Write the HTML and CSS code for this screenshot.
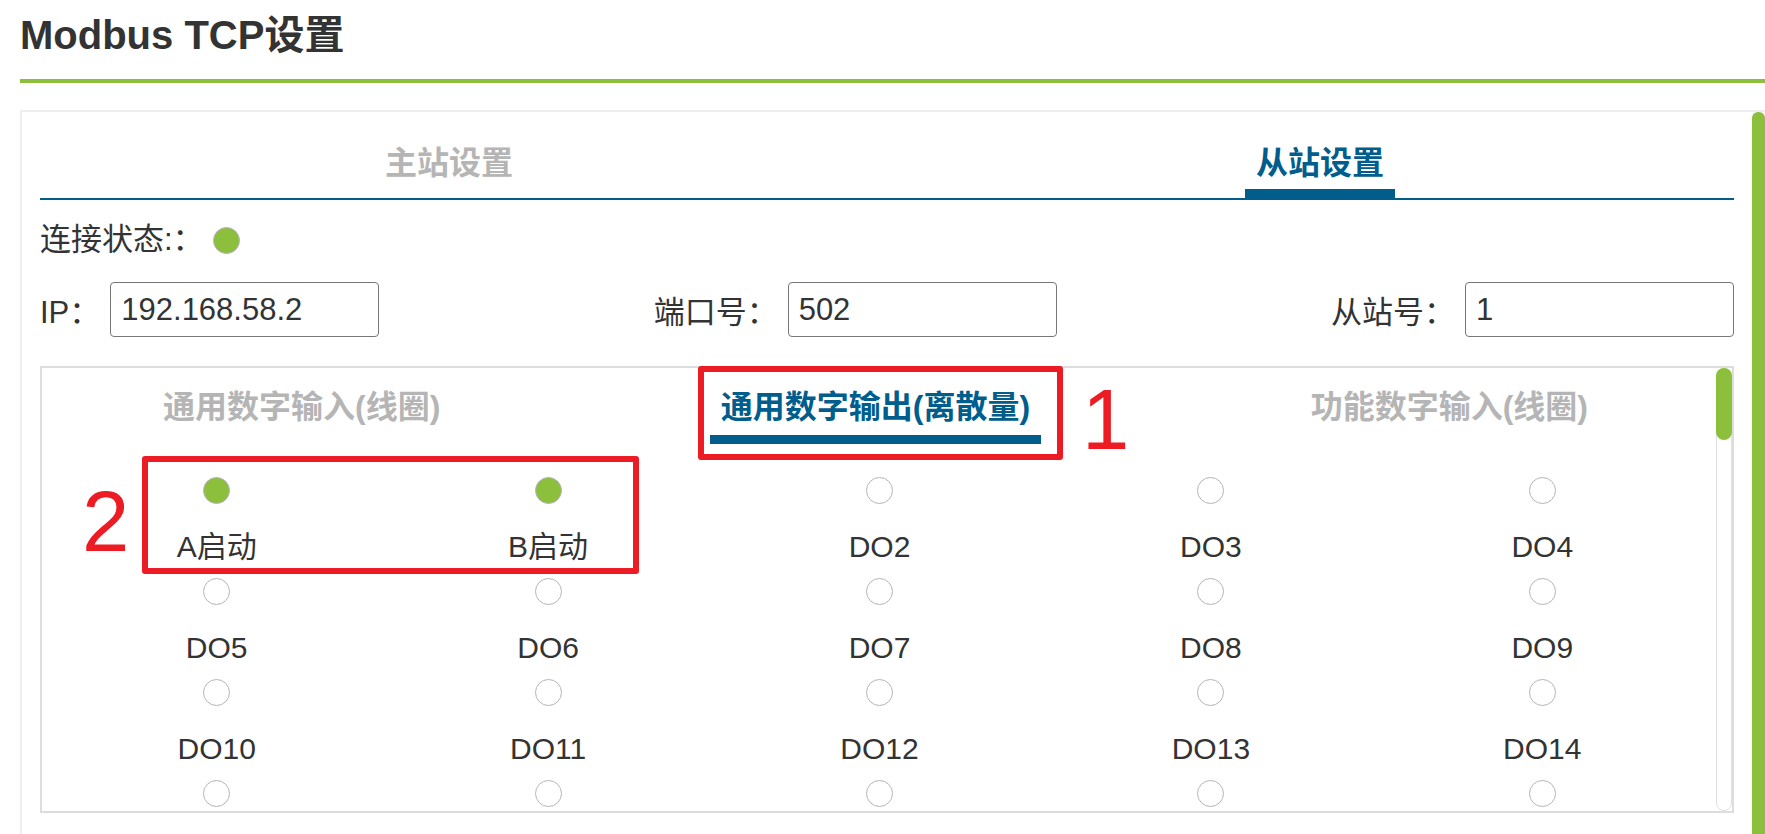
FILE: index.html
```html
<!DOCTYPE html>
<html lang="zh-CN">
<head>
<meta charset="utf-8">
<title>Modbus TCP设置</title>
<link rel="stylesheet" href="styles.css">
</head>
<body>
<div class="page">
  <h1 class="title">Modbus TCP设置</h1>
  <div class="panel">
    <div class="panel-body">
      <div class="tabs">
        <div class="tab">主站设置</div>
        <div class="tab active">从站设置</div>
      </div>
      <div class="status">
        <span>连接状态:：</span><span class="dot on status-dot"></span>
      </div>
      <div class="fields">
        <div class="field"><label>IP：</label><input class="inp" type="text" value="192.168.58.2"></div>
        <div class="field"><label>端口号：</label><input class="inp" type="text" value="502"></div>
        <div class="field"><label>从站号：</label><input class="inp" type="text" value="1"></div>
      </div>
      <div class="inner">
        <div class="inner-content">
          <div class="subtabs">
            <div class="subtab">通用数字输入(线圈)</div>
            <div class="subtab active">通用数字输出(离散量)</div>
            <div class="subtab">功能数字输入(线圈)</div>
          </div>
          <div class="grid">
            <div class="cell"><span class="dot on"></span><span class="lbl">A启动</span></div>
            <div class="cell"><span class="dot on"></span><span class="lbl">B启动</span></div>
            <div class="cell"><span class="dot"></span><span class="lbl">DO2</span></div>
            <div class="cell"><span class="dot"></span><span class="lbl">DO3</span></div>
            <div class="cell"><span class="dot"></span><span class="lbl">DO4</span></div>
            <div class="cell"><span class="dot"></span><span class="lbl">DO5</span></div>
            <div class="cell"><span class="dot"></span><span class="lbl">DO6</span></div>
            <div class="cell"><span class="dot"></span><span class="lbl">DO7</span></div>
            <div class="cell"><span class="dot"></span><span class="lbl">DO8</span></div>
            <div class="cell"><span class="dot"></span><span class="lbl">DO9</span></div>
            <div class="cell"><span class="dot"></span><span class="lbl">DO10</span></div>
            <div class="cell"><span class="dot"></span><span class="lbl">DO11</span></div>
            <div class="cell"><span class="dot"></span><span class="lbl">DO12</span></div>
            <div class="cell"><span class="dot"></span><span class="lbl">DO13</span></div>
            <div class="cell"><span class="dot"></span><span class="lbl">DO14</span></div>
            <div class="cell"><span class="dot"></span></div>
            <div class="cell"><span class="dot"></span></div>
            <div class="cell"><span class="dot"></span></div>
            <div class="cell"><span class="dot"></span></div>
            <div class="cell"><span class="dot"></span></div>
          </div>
        </div>
        <div class="vbar"><div class="thumb"></div></div>
      </div>
    </div>
    <div class="outer-bar"></div>
  </div>

  <div class="mark box1"></div>
  <div class="mark box2"></div>
  <div class="num num1">1</div>
  <div class="num num2">2</div>
</div>
</body>
</html>
```

FILE: styles.css
```css
html, body {
  margin: 0;
  height: 100%;
  overflow: hidden;
  background: #fff;
}
body {
  font-family: "Liberation Sans", "Noto Sans CJK SC", sans-serif;
  color: #333;
}
.page {
  position: relative;
  padding-left: 20px;
}
.title {
  margin: 0;
  padding-top: 10px;
  padding-bottom: 19px;
  font-size: 40px;
  line-height: 50px;
  font-weight: bold;
  color: #333;
  border-bottom: 4px solid #8cc03c;
}
.panel {
  margin-top: 27px;
  height: 760px;
  display: flex;
  border-top: 2px solid #eeeeee;
  border-left: 2px solid #eeeeee;
}
.panel-body {
  flex: 1;
  padding: 0 18px;
  min-width: 0;
}
.outer-bar {
  width: 13px;
  background: #8cc03c;
  border-radius: 6px 6px 0 0;
}
.tabs {
  display: flex;
  justify-content: space-between;
  padding: 31px 339px 0 334px;
  border-bottom: 2px solid #005d8c;
}
.tab {
  font-size: 32px;
  line-height: 40px;
  font-weight: bold;
  color: #b5b5b5;
  padding: 0 11px 6px;
  border-bottom: 9px solid transparent;
}
.tab.active {
  color: #005d8c;
  border-bottom-color: #005d8c;
}
.status {
  margin-top: 20px;
  display: flex;
  align-items: center;
  font-size: 31px;
  line-height: 40px;
}
.status-dot {
  margin-left: 9px;
}
.dot {
  display: block;
  width: 27px;
  height: 27px;
  box-sizing: border-box;
  border-radius: 50%;
  border: 1.5px solid #b5b5b5;
  background: #fff;
}
.dot.on {
  background: #8cc03c;
}
.fields {
  margin-top: 22px;
  display: flex;
  justify-content: space-between;
}
.field {
  display: flex;
  align-items: center;
  font-size: 31px;
}
.field label {
  margin-right: 10px;
}
.inp {
  width: 269px;
  height: 55px;
  box-sizing: border-box;
  border: 1px solid #777;
  border-radius: 4px;
  padding: 0 10px;
  font-family: "Liberation Sans", "Noto Sans CJK SC", sans-serif;
  font-size: 31px;
  color: #333;
  background: #fff;
  outline: none;
}
.inner {
  margin-top: 29px;
  height: 447px;
  box-sizing: border-box;
  border: 2px solid #dddddd;
  display: flex;
  overflow: hidden;
}
.inner-content {
  flex: 1;
  min-width: 0;
  overflow: hidden;
}
.vbar {
  width: 16px;
  box-sizing: border-box;
  border: 1px solid #e0e0e0;
  border-radius: 8px;
  display: flex;
  flex-direction: column;
}
.thumb {
  height: 72px;
  margin: -1px;
  background: #8cc03c;
  border-radius: 8px;
}
.subtabs {
  display: flex;
  justify-content: space-between;
  padding: 19px 117px 0 110px;
}
.subtab {
  font-size: 32px;
  line-height: 40px;
  font-weight: bold;
  color: #b5b5b5;
  padding: 0 11px 8px;
  border-bottom: 9px solid transparent;
}
.subtab.active {
  color: #005d8c;
  border-bottom-color: #005d8c;
}
.grid {
  display: grid;
  grid-template-columns: repeat(5, 1fr);
  padding: 33px 8px 0 9px;
}
.cell {
  display: flex;
  flex-direction: column;
  align-items: center;
}
.lbl {
  font-size: 30px;
  line-height: 62px;
  padding-top: 12px;
  white-space: nowrap;
}
.mark {
  position: absolute;
  border: 6px solid #ed1c24;
  border-radius: 3px;
  box-sizing: border-box;
}
.box1 {
  left: 698px;
  top: 366px;
  width: 365px;
  height: 94px;
}
.box2 {
  left: 142px;
  top: 456px;
  width: 497px;
  height: 118px;
}
.num {
  position: absolute;
  font-family: "Liberation Sans", sans-serif;
  font-size: 85px;
  line-height: 85px;
  color: #ed1c24;
}
.num1 {
  left: 1082px;
  top: 377px;
}
.num2 {
  left: 82px;
  top: 479px;
}
```
